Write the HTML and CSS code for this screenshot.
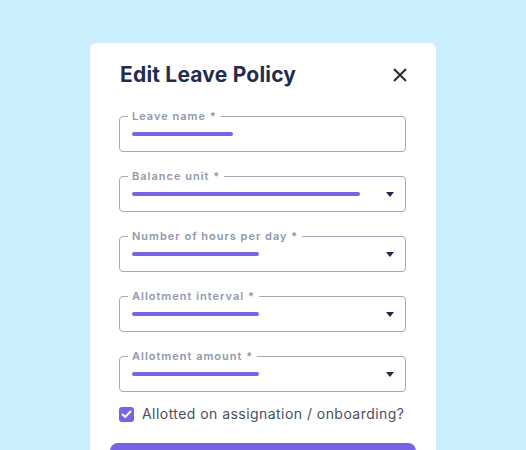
FILE: index.html
```html
<!DOCTYPE html>
<html lang="en">
<head>
<meta charset="utf-8">
<title>Edit Leave Policy</title>
<link rel="stylesheet" href="styles.css">
</head>
<body>
<div class="card">
  <div class="card-header">
    <h1 class="title">Edit Leave Policy</h1>
    <button class="close" aria-label="Close">
      <svg width="14" height="14" viewBox="0 0 14 14"><path d="M1 1 L13 13 M13 1 L1 13" stroke="#2b2b2e" stroke-width="2" stroke-linecap="butt"/></svg>
    </button>
  </div>
  <div class="card-body">
    <fieldset class="field">
      <legend class="field-label">Leave name *</legend>
      <div class="field-row"><span class="bar" style="width:101px"></span></div>
    </fieldset>
    <fieldset class="field">
      <legend class="field-label">Balance unit *</legend>
      <div class="field-row"><span class="bar" style="width:228px"></span><span class="caret"></span></div>
    </fieldset>
    <fieldset class="field">
      <legend class="field-label">Number of hours per day *</legend>
      <div class="field-row"><span class="bar" style="width:127px"></span><span class="caret"></span></div>
    </fieldset>
    <fieldset class="field">
      <legend class="field-label">Allotment interval *</legend>
      <div class="field-row"><span class="bar" style="width:127px"></span><span class="caret"></span></div>
    </fieldset>
    <fieldset class="field">
      <legend class="field-label">Allotment amount *</legend>
      <div class="field-row"><span class="bar" style="width:127px"></span><span class="caret"></span></div>
    </fieldset>
    <label class="check">
      <span class="check-box">
        <svg width="11" height="9" viewBox="0 0 11 9"><path d="M1.5 4.5 L4.2 7 L9.5 1.5" fill="none" stroke="#fff" stroke-width="2" stroke-linecap="round" stroke-linejoin="round"/></svg>
      </span>
      <span class="check-text">Allotted on assignation / onboarding?</span>
    </label>
  </div>
  <button class="submit" aria-label="Save"></button>
</div>
</body>
</html>
```
FILE: styles.css
```css
* { box-sizing: border-box; }
html, body { margin: 0; padding: 0; }
body {
  background: #cbeefd;
  font-family: "Inter", "Open Sans", sans-serif;
  height: 450px;
  overflow: hidden;
  display: flex;
  justify-content: center;
  align-items: flex-start;
  padding-top: 43px;
}
.card {
  width: 346px;
  background: #fff;
  border-radius: 6px;
  padding: 20px 20px 40px;
  display: flex;
  flex-direction: column;
}
.card-header {
  display: flex;
  align-items: center;
  justify-content: space-between;
  padding: 0 9px 0 10px;
  height: 24px;
}
.title {
  margin: 0;
  font-size: 21px;
  line-height: 24px;
  font-weight: 700;
  color: #1f2d4e;
  letter-spacing: 0.2px;
}
.close {
  border: 0;
  background: none;
  padding: 0;
  width: 14px;
  height: 14px;
  display: flex;
}
.card-body {
  padding: 0 10px 0 9px;
  margin-top: 23px;
  display: flex;
  flex-direction: column;
  gap: 18px;
}
.field {
  margin: 0;
  border: 1px solid #a4abb8;
  border-radius: 4px;
  padding: 0 11px 0 12px;
  min-width: 0;
}
.field-label {
  padding: 0 4px;
  margin-left: -4px;
  font-size: 11px;
  line-height: 12px;
  font-weight: 600;
  color: #8f98ab;
  letter-spacing: 1px;
}
.field-row {
  display: flex;
  align-items: center;
  justify-content: space-between;
  padding: 10px 0 15px;
  height: 29px;
}
.bar {
  display: block;
  height: 4px;
  border-radius: 2px;
  background: #7463e2;
}
.caret {
  width: 0;
  height: 0;
  border-left: 4px solid transparent;
  border-right: 4px solid transparent;
  border-top: 5px solid #1e2b4a;
}
.check {
  display: flex;
  align-items: center;
  gap: 8px;
  margin-top: -5px;
}
.check-box {
  flex: none;
  width: 15px;
  height: 15px;
  border-radius: 3px;
  background: #7763e3;
  display: flex;
  align-items: center;
  justify-content: center;
}
.check-text {
  font-size: 14px;
  line-height: 18px;
  color: #4b4f5a;
  letter-spacing: 0.45px;
  white-space: nowrap;
}
.submit {
  margin-top: 20px;
  height: 44px;
  border: 0;
  border-radius: 8px;
  background: #7763e3;
}
```
